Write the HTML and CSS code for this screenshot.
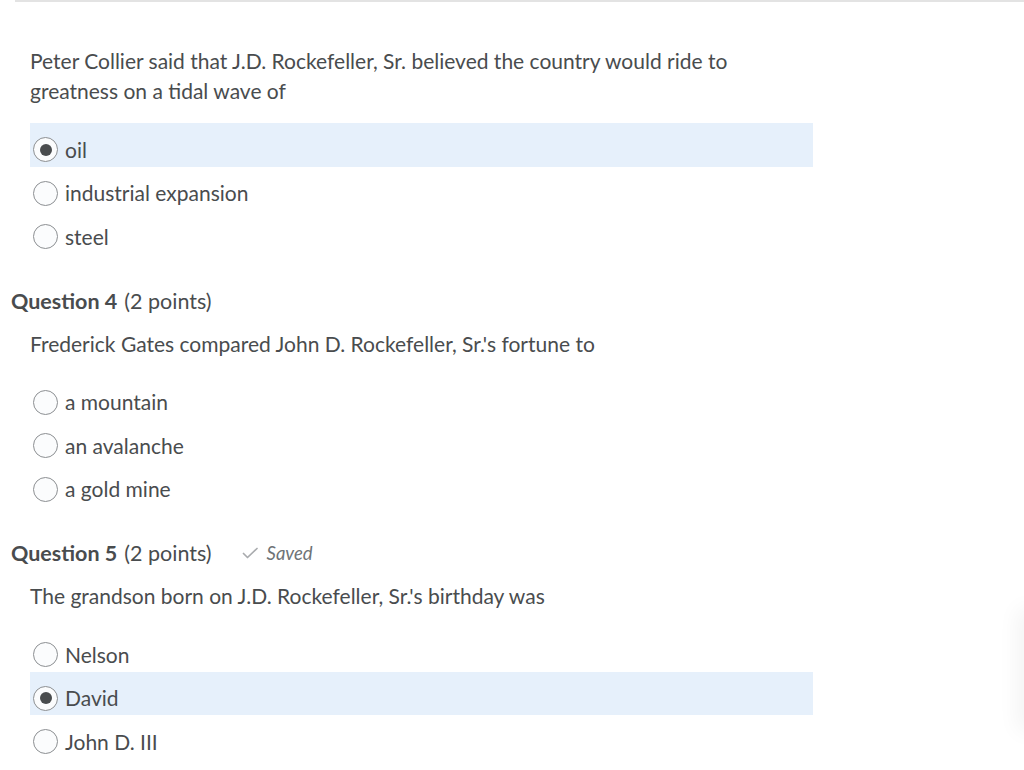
FILE: index.html
```html
<!DOCTYPE html>
<html>
<head>
<meta charset="utf-8">
<link rel="stylesheet" href="styles.css">
</head>
<body>
<div class="topline"></div>
<main class="quiz">
  <section class="question first">
    <p class="qtext">Peter Collier said that J.D. Rockefeller, Sr. believed the country would ride to greatness on a tidal wave of</p>
    <ul class="options">
      <li class="option selected"><span class="radio checked"></span><span class="label">oil</span></li>
      <li class="option"><span class="radio"></span><span class="label">industrial expansion</span></li>
      <li class="option"><span class="radio"></span><span class="label">steel</span></li>
    </ul>
  </section>
  <section class="question">
    <h2 class="qhead"><strong>Question 4</strong> (2 points)</h2>
    <p class="qtext">Frederick Gates compared John D. Rockefeller, Sr.'s fortune to</p>
    <ul class="options">
      <li class="option"><span class="radio"></span><span class="label">a mountain</span></li>
      <li class="option"><span class="radio"></span><span class="label">an avalanche</span></li>
      <li class="option"><span class="radio"></span><span class="label">a gold mine</span></li>
    </ul>
  </section>
  <section class="question">
    <h2 class="qhead"><strong>Question 5</strong> (2 points)
      <span class="saved"><svg class="check" width="17" height="14" viewBox="0 0 17 14"><polyline points="1.5,7.5 5.5,11.5 15,2.5" fill="none" stroke="#a9abae" stroke-width="1.7" stroke-linecap="round" stroke-linejoin="round"/></svg><em>Saved</em></span>
    </h2>
    <p class="qtext">The grandson born on J.D. Rockefeller, Sr.'s birthday was</p>
    <ul class="options">
      <li class="option"><span class="radio"></span><span class="label">Nelson</span></li>
      <li class="option selected"><span class="radio checked"></span><span class="label">David</span></li>
      <li class="option"><span class="radio"></span><span class="label">John D. III</span></li>
    </ul>
  </section>
</main>
<div class="edge-shadow"></div>
</body>
</html>
```

FILE: styles.css
```css
html, body {
  margin: 0;
  padding: 0;
  background: #ffffff;
}
body {
  font-family: Lato, "Open Sans", sans-serif;
  color: #494c4e;
  font-size: 21px;
  position: relative;
  width: 1024px;
  height: 770px;
  overflow: hidden;
}
.topline {
  height: 2px;
  margin-left: 15px;
  background: #e3e3e3;
}
.quiz {
  padding: 0 0 0 11px;
}
.question {
  margin-top: 32px;
}
.question.first {
  margin-top: 44px;
}
.qhead {
  margin: 0 0 13px 0;
  font-size: 21.5px;
  font-weight: normal;
  line-height: 30px;
  display: flex;
  align-items: center;
}
.qhead strong {
  font-weight: bold;
  margin-right: 7px;
}
.saved {
  display: inline-flex;
  align-items: center;
  margin-left: 30px;
  color: #6e7376;
  font-size: 18.5px;
}
.saved .check {
  margin-right: 8px;
}
.qtext {
  margin: 0 0 17px 19px;
  line-height: 30px;
  width: 740px;
}
.options {
  list-style: none;
  margin: 0 0 0 19px;
  padding: 0;
  width: 783px;
}
.option {
  height: 43.5px;
  box-sizing: border-box;
  padding: 10px 0 0 3px;
  display: flex;
  align-items: center;
}
.option.selected {
  background: #e6f0fb;
}
.radio {
  width: 25px;
  height: 25px;
  box-sizing: border-box;
  border: 1px solid #8c8f92;
  border-radius: 50%;
  background: #fbfcfd;
  margin-right: 7px;
  display: flex;
  align-items: center;
  justify-content: center;
  flex: none;
}
.radio.checked::after {
  content: "";
  width: 12px;
  height: 12px;
  border-radius: 50%;
  background: #494c4e;
}
.label {
  line-height: 24px;
}
.edge-shadow {
  position: absolute;
  right: -20px;
  top: 615px;
  width: 20px;
  height: 110px;
  box-shadow: 0 0 22px 6px rgba(0,0,0,0.05);
}
```
